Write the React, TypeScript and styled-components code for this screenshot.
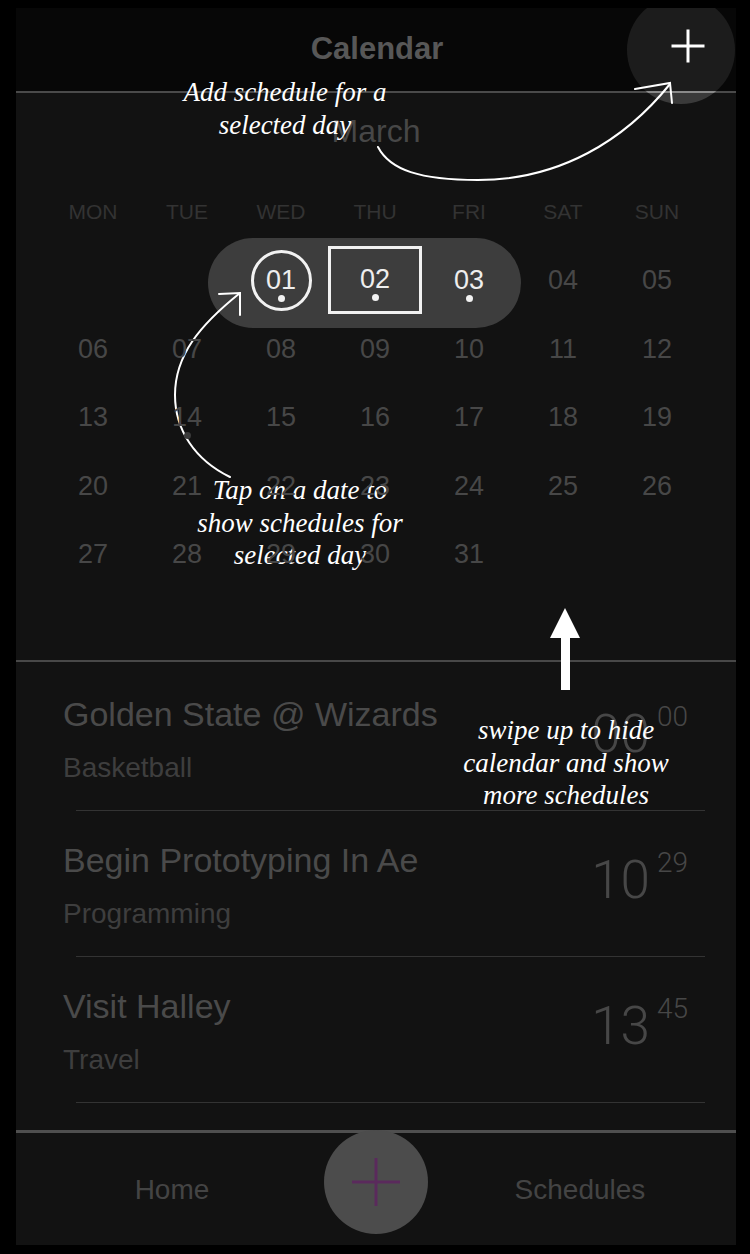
import React from "react";
import styled, { createGlobalStyle, css } from "styled-components";

const GlobalStyle = createGlobalStyle`
  html, body { margin: 0; padding: 0; background: #000; }
  body { font-family: "Liberation Sans", Arial, sans-serif; }
  * { box-sizing: border-box; }
`;

const Frame = styled.div`
  position: relative;
  width: 750px;
  height: 1254px;
  background: #000;
  padding: 8px 14px 9px 16px;
`;

const Screen = styled.div`
  position: relative;
  height: 100%;
  overflow: hidden;
  display: flex;
  flex-direction: column;
  background: #121212;
`;

const Header = styled.header`
  flex-shrink: 0;
  height: 85px;
  background: #070707;
  border-bottom: 2px solid #4a4a4a;
  display: flex;
  align-items: center;
  justify-content: center;
  padding-bottom: 1px;
`;

const HeaderTitle = styled.h1`
  margin: 0;
  font-size: 31px;
  line-height: 40px;
  font-weight: 700;
  color: #575757;
  padding-left: 2px;
`;

const AddCircle = styled.button`
  position: absolute;
  left: 611px;
  top: -12px;
  width: 108px;
  height: 108px;
  border: 0;
  border-radius: 50%;
  padding: 0 0 8px 14px;
  display: flex;
  align-items: center;
  justify-content: center;
  background: linear-gradient(
    to bottom,
    #1c1c1c 0,
    #1c1c1c 95px,
    #8a8a8a 95px,
    #8a8a8a 97px,
    #3a3a3a 97px,
    #3a3a3a 100%
  );
`;

const CalendarSection = styled.section`
  flex-shrink: 0;
  height: 567px;
  display: flex;
  flex-direction: column;
  padding: 18px 32px 0 30px;
`;

const MonthLabel = styled.div`
  text-align: center;
  font-size: 32px;
  line-height: 40px;
  color: #474747;
  padding-left: 2px;
`;

const WeekRow = styled.div`
  margin-top: 46px;
  display: grid;
  grid-template-columns: repeat(7, 94px);
`;

const WeekdayLabel = styled.div`
  text-align: center;
  font-size: 21px;
  line-height: 30px;
  color: #333333;
`;

const DateGrid = styled.div`
  position: relative;
  margin-top: 20px;
  display: grid;
  grid-template-columns: repeat(7, 94px);
  grid-auto-rows: 68.5px;
`;

const Pill = styled.div`
  position: absolute;
  left: 162px;
  top: -9px;
  width: 313px;
  height: 90px;
  border-radius: 45px;
  background: #3d3d3d;
`;

const DateCell = styled.div`
  position: relative;
  z-index: 1;
  display: flex;
  align-items: center;
  justify-content: center;
`;

type Shape = "circle" | "box" | "none";

const Marker = styled.div<{ $shape: Shape }>`
  position: relative;
  display: flex;
  align-items: center;
  justify-content: center;
  ${(p) =>
    p.$shape === "circle" &&
    css`
      width: 61px;
      height: 61px;
      border: 3px solid #f2f2f2;
      border-radius: 50%;
      margin-top: -1px;
    `}
  ${(p) =>
    p.$shape === "box" &&
    css`
      width: 94px;
      height: 68px;
      border: 3px solid #f2f2f2;
      margin-top: -3px;
    `}
  ${(p) =>
    p.$shape === "none" &&
    css`
      width: 60px;
      height: 60px;
    `}
`;

const DayNumber = styled.span<{ $lit: boolean }>`
  font-size: 27px;
  line-height: 30px;
  color: ${(p) => (p.$lit ? "#eeeeee" : "#474747")};
  margin-top: -2px;
`;

const EventDot = styled.span<{ $lit: boolean }>`
  position: absolute;
  left: 50%;
  top: calc(50% + 14px);
  width: 7px;
  height: 7px;
  margin-left: -3px;
  border-radius: 50%;
  background: ${(p) => (p.$lit ? "#f2f2f2" : "#3a3a3a")};
`;

const Separator = styled.div`
  flex-shrink: 0;
  height: 2px;
  background: #484848;
`;

const ScheduleList = styled.ul`
  flex: 1;
  margin: 0;
  padding: 3px 0 0 0;
  list-style: none;
  display: flex;
  flex-direction: column;
`;

const ScheduleItem = styled.li`
  display: flex;
  flex-direction: column;
`;

const ScheduleRow = styled.div`
  height: 145px;
  display: flex;
  justify-content: space-between;
  padding: 29px 48px 0 47px;
`;

const ScheduleText = styled.div`
  display: flex;
  flex-direction: column;
  gap: 17px;
`;

const ScheduleTitle = styled.div`
  font-size: 34px;
  line-height: 40px;
  color: #4a4a4a;
  white-space: nowrap;
`;

const ScheduleCategory = styled.div`
  font-size: 28px;
  line-height: 34px;
  color: #3e3e3e;
`;

const TimeBlock = styled.div`
  display: flex;
  align-items: flex-start;
  margin-top: 14px;
  font-family: Roboto, "Liberation Sans", sans-serif;
  font-weight: 300;
  color: #474747;
`;

const TimeHour = styled.span`
  font-size: 53px;
  line-height: 52px;
`;

const TimeMinute = styled.span`
  font-size: 28px;
  line-height: 28px;
  margin-left: 7px;
  margin-top: -5px;
`;

const RowDivider = styled.div`
  height: 1px;
  margin: 0 31px 0 60px;
  background: #333;
`;

const TabBar = styled.nav`
  flex-shrink: 0;
  height: 115px;
  border-top: 3px solid #4f4f4f;
  display: grid;
  grid-template-columns: 1fr 96px 1fr;
`;

const TabLabel = styled.div`
  display: flex;
  align-items: center;
  justify-content: center;
  font-size: 28px;
  color: #444;
  padding-top: 2px;
`;

const CenterSlot = styled.div`
  display: flex;
  justify-content: center;
  align-items: flex-start;
`;

const CenterButton = styled.button`
  flex-shrink: 0;
  width: 104px;
  height: 104px;
  margin-top: -3px;
  border: 0;
  border-radius: 50%;
  background: #4c4c4c;
  display: flex;
  align-items: center;
  justify-content: center;
  padding: 0;
`;

const ArrowLayer = styled.svg`
  position: absolute;
  left: 0;
  top: 0;
  pointer-events: none;
`;

const Annotation = styled.div<{ $left: number; $top: number; $width: number }>`
  position: absolute;
  left: ${(p) => p.$left}px;
  top: ${(p) => p.$top}px;
  width: ${(p) => p.$width}px;
  text-align: center;
  font-family: "Liberation Serif", "Times New Roman", serif;
  font-style: italic;
  font-size: 27px;
  line-height: 32.5px;
  color: #fff;
  white-space: nowrap;
`;

const weekdays = ["MON", "TUE", "WED", "THU", "FRI", "SAT", "SUN"];

type Cell = { day: number | null; shape: Shape; lit: boolean; dot: boolean };

const cells: Cell[] = [];
for (let i = 0; i < 2; i++) cells.push({ day: null, shape: "none", lit: false, dot: false });
for (let d = 1; d <= 31; d++) {
  cells.push({
    day: d,
    shape: d === 1 ? "circle" : d === 2 ? "box" : "none",
    lit: d <= 3,
    dot: d <= 3 || d === 14,
  });
}

const schedules = [
  { title: "Golden State @ Wizards", category: "Basketball", hour: "00", minute: "00" },
  { title: "Begin Prototyping In Ae", category: "Programming", hour: "10", minute: "29" },
  { title: "Visit Halley", category: "Travel", hour: "13", minute: "45" },
];

const pad = (n: number) => (n < 10 ? `0${n}` : `${n}`);

export default function App() {
  return (
    <>
      <GlobalStyle />
      <Frame>
        <Screen>
          <Header>
            <HeaderTitle>Calendar</HeaderTitle>
          </Header>
          <AddCircle aria-label="Add schedule">
            <svg width="36" height="36" viewBox="0 0 36 36">
              <path d="M18 1.5V34.5M1.5 18H34.5" stroke="#fff" strokeWidth="3" fill="none" />
            </svg>
          </AddCircle>

          <CalendarSection>
            <MonthLabel>March</MonthLabel>
            <WeekRow>
              {weekdays.map((w) => (
                <WeekdayLabel key={w}>{w}</WeekdayLabel>
              ))}
            </WeekRow>
            <DateGrid>
              <Pill />
              {cells.map((c, i) => (
                <DateCell key={i}>
                  {c.day !== null && (
                    <Marker $shape={c.shape}>
                      <DayNumber $lit={c.lit}>{pad(c.day)}</DayNumber>
                      {c.dot && <EventDot $lit={c.lit} />}
                    </Marker>
                  )}
                </DateCell>
              ))}
            </DateGrid>
          </CalendarSection>

          <Separator />

          <ScheduleList>
            {schedules.map((s) => (
              <ScheduleItem key={s.title}>
                <ScheduleRow>
                  <ScheduleText>
                    <ScheduleTitle>{s.title}</ScheduleTitle>
                    <ScheduleCategory>{s.category}</ScheduleCategory>
                  </ScheduleText>
                  <TimeBlock>
                    <TimeHour>{s.hour}</TimeHour>
                    <TimeMinute>{s.minute}</TimeMinute>
                  </TimeBlock>
                </ScheduleRow>
                <RowDivider />
              </ScheduleItem>
            ))}
          </ScheduleList>

          <TabBar>
            <TabLabel>Home</TabLabel>
            <CenterSlot>
              <CenterButton aria-label="Add">
                <svg width="50" height="50" viewBox="0 0 50 50">
                  <path d="M25 1V49M1 25H49" stroke="#5a2a5c" strokeWidth="3" fill="none" />
                </svg>
              </CenterButton>
            </CenterSlot>
            <TabLabel>Schedules</TabLabel>
          </TabBar>
        </Screen>

        <ArrowLayer width="750" height="1254" viewBox="0 0 750 1254">
          <g stroke="#fff" strokeWidth="2" fill="none" strokeLinecap="round">
            <path d="M378 147 C390 170 420 180 478 180 C560 180 625 140 670 84" />
            <path d="M635 89 L670 83 L672 103" />
            <path d="M230 477 C195 460 175 430 175 395 C175 355 200 325 240 293" />
            <path d="M219 294 L240 293 L240 315" />
          </g>
          <g fill="#fff">
            <polygon points="565,608 580,638 550,638" />
            <rect x="561" y="637" width="9" height="53" />
          </g>
        </ArrowLayer>

        <Annotation $left={135} $top={76} $width={300}>
          Add schedule for a
          <br />
          selected day
        </Annotation>
        <Annotation $left={150} $top={474} $width={300}>
          Tap on a date to
          <br />
          show schedules for
          <br />
          selected day
        </Annotation>
        <Annotation $left={416} $top={714} $width={300}>
          swipe up to hide
          <br />
          calendar and show
          <br />
          more schedules
        </Annotation>
      </Frame>
    </>
  );
}
